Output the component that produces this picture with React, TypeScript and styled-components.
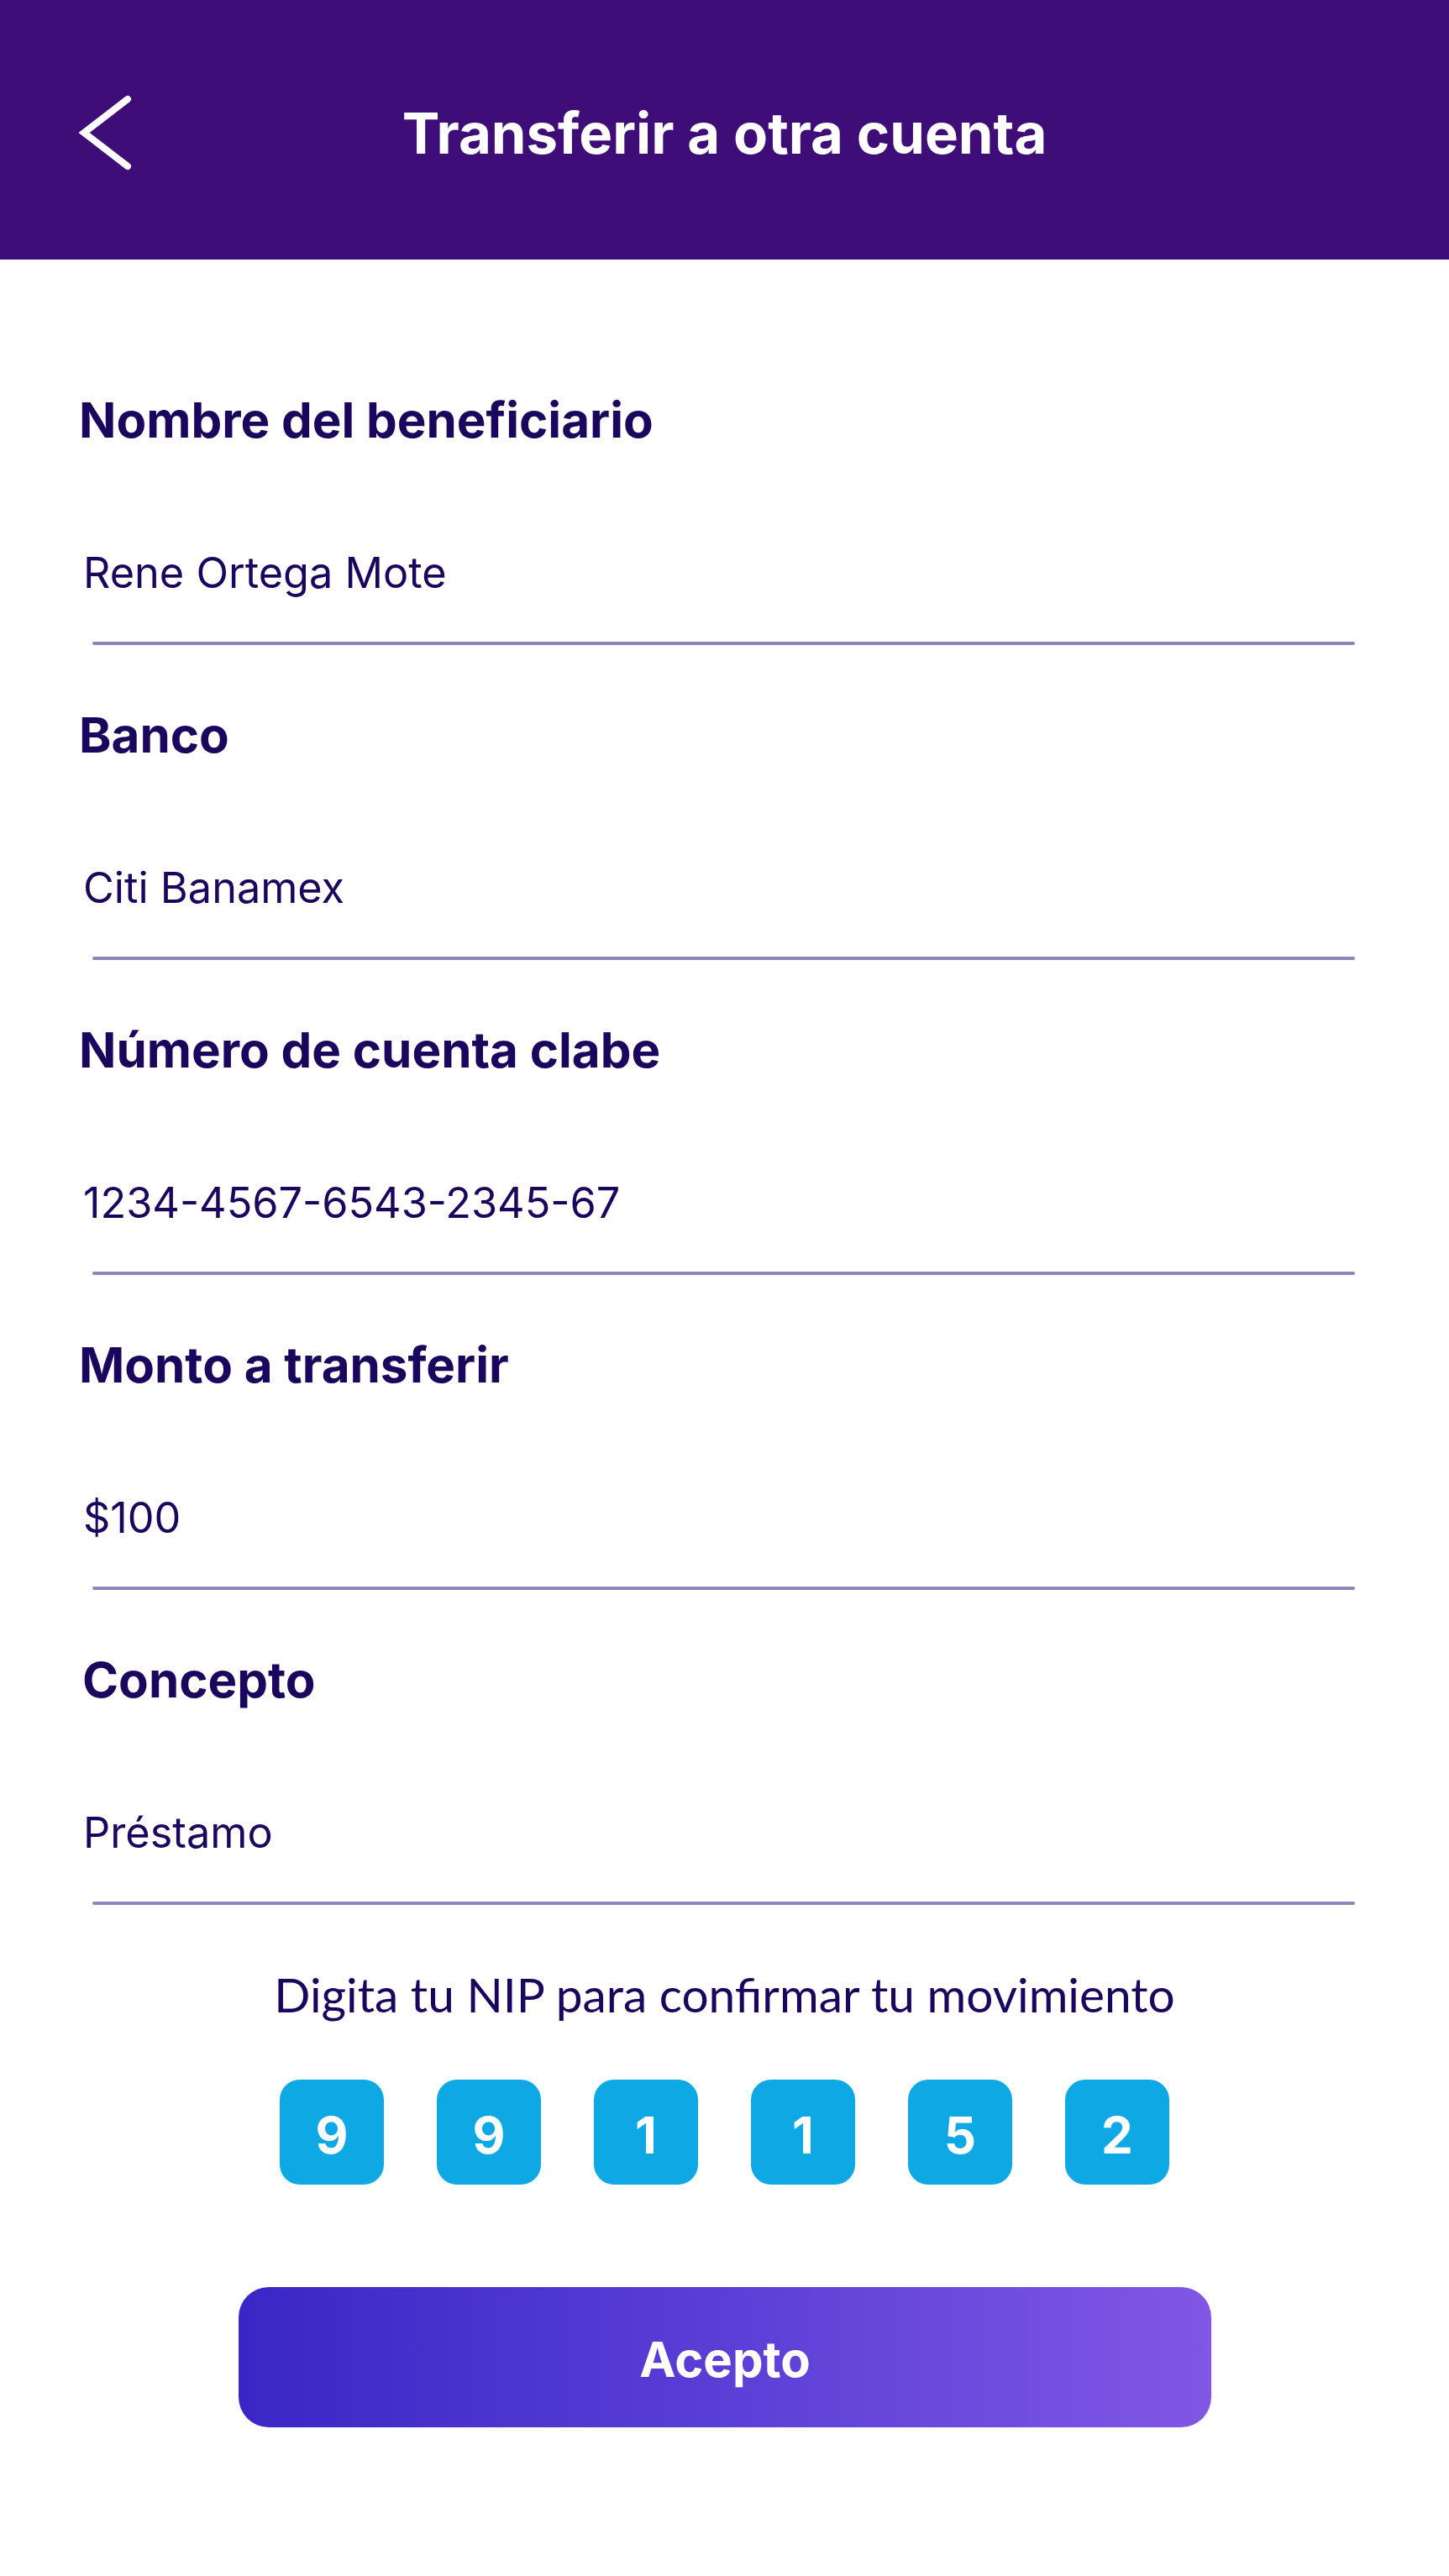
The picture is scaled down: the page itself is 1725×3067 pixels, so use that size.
import React from "react";
import styled, { createGlobalStyle } from "styled-components";

const GlobalStyle = createGlobalStyle`
  html, body {
    margin: 0;
    padding: 0;
    background: #ffffff;
  }
  body {
    font-family: "Inter", "Liberation Sans", sans-serif;
    -webkit-font-smoothing: antialiased;
  }
  * { box-sizing: border-box; }
`;

const Page = styled.div`
  width: 1725px;
  min-height: 3067px;
  background: #ffffff;
  display: flex;
  flex-direction: column;
`;

const Header = styled.header`
  height: 309px;
  background: #3e0d77;
  display: grid;
  grid-template-columns: 1fr auto 1fr;
  align-items: center;
  padding: 0 88px;
`;

const BackButton = styled.button`
  justify-self: start;
  width: 72px;
  height: 96px;
  padding: 0;
  border: none;
  background: transparent;
  display: flex;
  align-items: center;
  justify-content: center;
  cursor: pointer;
  margin-top: 6px;
`;

const Title = styled.h1`
  margin: 0;
  font-family: "Inter", sans-serif;
  font-weight: 700;
  font-size: 67px;
  line-height: 80px;
  color: #ffffff;
  margin-top: 8px;
`;

const Form = styled.main`
  display: flex;
  flex-direction: column;
  padding-top: 155px;
`;

const Field = styled.section`
  display: flex;
  flex-direction: column;
  padding-bottom: 71px;
`;

const Label = styled.label<{ $indent?: number }>`
  margin: 0 0 0 ${(p) => p.$indent ?? 94}px;
  font-family: "Inter", sans-serif;
  font-weight: 700;
  font-size: 58.3px;
  line-height: 72px;
  color: #1b065e;
`;

const Value = styled.div`
  margin: 116px 0 0 99px;
  font-family: "Inter", sans-serif;
  font-weight: 400;
  font-size: 50.4px;
  line-height: 60px;
  color: #1b065e;
`;

const Underline = styled.div`
  margin: 52px 0 0 110px;
  width: 1503px;
  height: 4px;
  border-radius: 2px;
  background: #8f85b8;
`;

const NipPrompt = styled.p`
  margin: 0;
  text-align: center;
  font-family: "Lato", "Noto Sans", sans-serif;
  font-weight: 400;
  font-size: 56.8px;
  line-height: 70px;
  color: #1b065e;
`;

const NipRow = styled.div`
  margin-top: 67px;
  display: flex;
  justify-content: center;
  gap: 63px;
`;

const NipBox = styled.div`
  width: 124px;
  height: 125px;
  border-radius: 24px;
  background: #0ea9e5;
  color: #ffffff;
  font-family: "Inter", sans-serif;
  font-weight: 700;
  font-size: 60px;
  display: flex;
  align-items: center;
  justify-content: center;
  padding-top: 6px;
`;

const ButtonRow = styled.div`
  margin-top: 122px;
  padding-bottom: 177px;
  display: flex;
  justify-content: center;
`;

const AcceptButton = styled.button`
  width: 1158px;
  height: 167px;
  border: none;
  border-radius: 36px;
  background: linear-gradient(90deg, #3a26c6 0%, #5a3fd6 50%, #8157e5 100%);
  color: #ffffff;
  font-family: "Inter", sans-serif;
  font-weight: 700;
  font-size: 58px;
  cursor: pointer;
  padding-top: 6px;
  margin-left: 1px;
`;

const fields = [
  { label: "Nombre del beneficiario", value: "Rene Ortega Mote" },
  { label: "Banco", value: "Citi Banamex" },
  { label: "Número de cuenta clabe", value: "1234-4567-6543-2345-67" },
  { label: "Monto a transferir", value: "$100" },
  { label: "Concepto", value: "Préstamo", indent: 98 },
];

const nip = ["9", "9", "1", "1", "5", "2"];

export default function App() {
  return (
    <>
      <GlobalStyle />
      <Page>
        <Header>
          <BackButton aria-label="Regresar">
            <svg width="72" height="96" viewBox="0 0 72 96" fill="none">
              <path
                d="M64 8 L12 48 L64 88"
                stroke="#ffffff"
                strokeWidth="8"
                strokeLinecap="round"
                strokeLinejoin="miter"
              />
            </svg>
          </BackButton>
          <Title>Transferir a otra cuenta</Title>
          <span />
        </Header>
        <Form>
          {fields.map((f) => (
            <Field key={f.label}>
              <Label $indent={f.indent}>{f.label}</Label>
              <Value>{f.value}</Value>
              <Underline />
            </Field>
          ))}
          <NipPrompt>Digita tu NIP para confirmar tu movimiento</NipPrompt>
          <NipRow>
            {nip.map((d, i) => (
              <NipBox key={i}>{d}</NipBox>
            ))}
          </NipRow>
          <ButtonRow>
            <AcceptButton>Acepto</AcceptButton>
          </ButtonRow>
        </Form>
      </Page>
    </>
  );
}
